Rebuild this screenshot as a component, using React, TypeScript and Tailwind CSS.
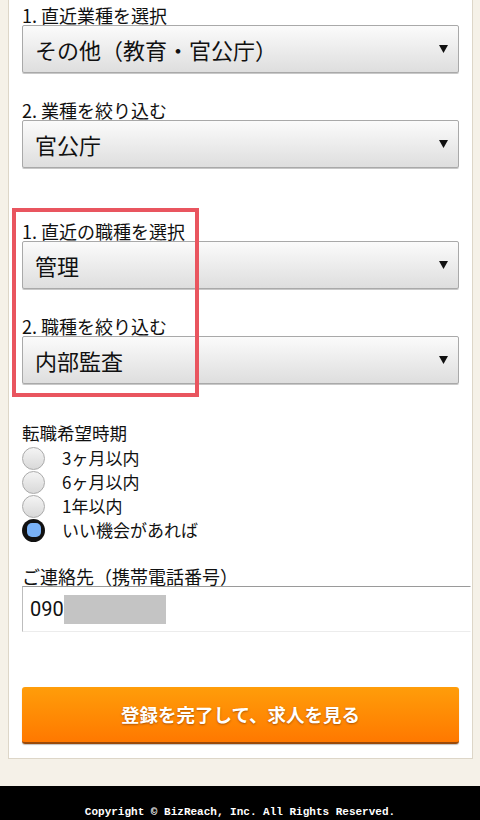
import { useState } from 'react';

const jp = { fontFamily: '"Noto Sans CJK JP", "Noto Sans", sans-serif' };

interface SelectProps {
  value: string;
}

function FakeSelect({ value }: SelectProps) {
  return (
    <div className="flex h-[48px] items-center justify-between rounded-[2px] border border-[#a9a9a9] bg-gradient-to-b from-[#fbfbfb] to-[#dedede] pl-[12px] pr-[10px] shadow-[0_1px_0_#c8c8c8]">
      <span className="block text-[22px] leading-[26px] text-[#111]">{value}</span>
      <svg width="9" height="8" viewBox="0 0 9 8">
        <path d="M0 0 H9 L4.5 8 Z" fill="#111" />
      </svg>
    </div>
  );
}

function Label({ text, className = '' }: { text: string; className?: string }) {
  return <div className={`h-[20px] leading-[20px] text-[#111] ${className}`}>{text}</div>;
}

const periods = ['3ヶ月以内', '6ヶ月以内', '1年以内', 'いい機会があれば'];

export default function App() {
  const [period, setPeriod] = useState(3);

  return (
    <div className="relative min-h-[820px] bg-[#f5f1e8]" style={jp}>
      <div className="mx-[7px] ml-[8px] border border-t-0 border-[#ddd6c8] bg-white px-[13px] pt-[5px] pb-[14px]">
        <Label text="1. 直近業種を選択" className="text-[18px]" />
        <FakeSelect value="その他（教育・官公庁）" />

        <Label text="2. 業種を絞り込む" className="mt-[27px] text-[18px]" />
        <FakeSelect value="官公庁" />

        <Label text="1. 直近の職種を選択" className="mt-[53px] text-[18px]" />
        <FakeSelect value="管理" />

        <Label text="2. 職種を絞り込む" className="mt-[27px] text-[18px]" />
        <FakeSelect value="内部監査" />

        <Label text="転職希望時期" className="mt-[39px] text-[17.5px]" />
        <div className="mt-[3px] flex flex-col">
          {periods.map((p, i) => (
            <button
              key={p}
              onClick={() => setPeriod(i)}
              className="flex h-[24px] items-center text-left"
            >
              {period === i ? (
                <span className="flex h-[23px] w-[23px] items-center justify-center rounded-full bg-[#111]">
                  <span className="h-[14px] w-[14px] rounded-[5px] bg-[#79b1f6]" />
                </span>
              ) : (
                <span className="h-[23px] w-[23px] rounded-full border border-[#aaa] bg-gradient-to-b from-[#f4f4f4] to-[#d9d9d9]" />
              )}
              <span className="ml-[17px] block text-[17px] leading-[20px] text-[#111]">{p}</span>
            </button>
          ))}
        </div>

        <Label text="ご連絡先（携帯電話番号）" className="mt-[24px] text-[18px]" />
        <div className="flex h-[46px] w-[calc(100%+12px)] items-center border border-t-[#9a9a9a] border-l-[#bdbdbd] border-r-transparent border-b-[#ececec] bg-white pl-[7px]">
          <span className="text-[20px] leading-none text-[#111]" style={{ fontFamily: 'Roboto, "Liberation Sans", sans-serif' }}>
            090
          </span>
          <span className="h-[29px] w-[102px] bg-[#c4c4c4]" />
        </div>

        <button className="mt-[55px] flex h-[57px] w-full items-center justify-center rounded-[3px] border-b-[2px] border-[#9a4a0a] bg-gradient-to-b from-[#ff9d0a] to-[#ff7800] shadow-[0_1px_1px_rgba(0,0,0,0.25)]">
          <span className="text-[18.5px] font-bold text-white [text-shadow:0_1px_2px_rgba(120,50,0,0.6)]">
            登録を完了して、求人を見る
          </span>
        </button>
      </div>

      <footer className="mt-[27px] bg-black py-[10px] text-center">
        <span
          className="text-[11px] font-bold leading-[18px] text-white"
          style={{ fontFamily: '"Liberation Mono", "Noto Sans CJK JP", monospace' }}
        >
          Copyright © BizReach, Inc. All Rights Reserved.
        </span>
      </footer>

      {/* highlight box over the job category fields */}
      <div className="pointer-events-none absolute left-[12px] top-[208px] h-[189px] w-[187px] border-[4px] border-[#e9555f]" />
    </div>
  );
}
